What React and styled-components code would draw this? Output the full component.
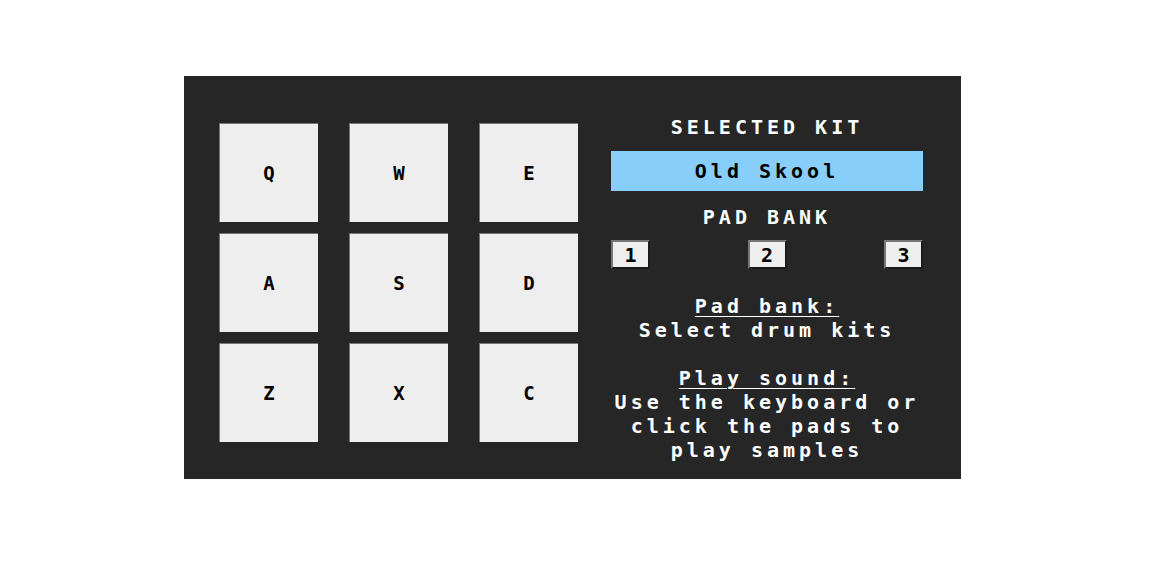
import React from 'react'
import styled, { createGlobalStyle } from 'styled-components'

const GlobalStyle = createGlobalStyle`
	html, body {
		margin: 0;
		padding: 0;
		background: #ffffff;
	}
`

const pads = ['Q', 'W', 'E', 'A', 'S', 'D', 'Z', 'X', 'C']

const App = () => {
	return (
		<Page>
			<GlobalStyle />
			<Machine>
				<PadGrid>
					{pads.map(key => (
						<Pad key={key}>{key}</Pad>
					))}
				</PadGrid>
				<Controls>
					<Label>SELECTED KIT</Label>
					<KitDisplay>Old Skool</KitDisplay>
					<Label $top={14}>PAD BANK</Label>
					<BankRow>
						<BankButton>1</BankButton>
						<BankButton>2</BankButton>
						<BankButton>3</BankButton>
					</BankRow>
					<Help>
						<u>Pad bank:</u>
						<br />
						Select drum kits
						<br />
						<br />
						<u>Play sound:</u>
						<br />
						Use the keyboard or
						<br />
						click the pads to
						<br />
						play samples
					</Help>
				</Controls>
			</Machine>
		</Page>
	)
}

export default App

const Page = styled.div`
	padding: 76px 0 0 184px;
`

const Machine = styled.div`
	width: 777px;
	height: 403px;
	box-sizing: border-box;
	padding: 39px 38px 0 35px;
	background: #262626;
	display: flex;
	align-items: flex-start;
	gap: 33px;
	font-family: "DejaVu Sans Mono", "Liberation Mono", monospace;
	font-weight: bold;
	font-size: 20px;
`

const PadGrid = styled.div`
	margin-top: 8px;
	display: grid;
	grid-template-columns: repeat(3, 99px);
	grid-auto-rows: 99px;
	column-gap: 31px;
	row-gap: 11px;
`

const Pad = styled.div`
	box-sizing: border-box;
	background: #eeeeee;
	border-top: 1px solid #777777;
	border-left: 1px solid #777777;
	color: #000000;
	display: flex;
	align-items: center;
	justify-content: center;
	font-size: 19px;
`

const Controls = styled.div`
	width: 312px;
	display: flex;
	flex-direction: column;
	color: #ffffff;
	text-align: center;
	line-height: 24px;
	letter-spacing: 4px;
`

const Label = styled.div`
	margin-top: ${ p => p.$top || 0 }px;
`

const KitDisplay = styled.div`
	margin-top: 12px;
	height: 40px;
	background: #87cefa;
	color: #000000;
	display: flex;
	align-items: center;
	justify-content: center;
`

const BankRow = styled.div`
	margin-top: 11px;
	display: flex;
	justify-content: space-between;
`

const BankButton = styled.div`
	box-sizing: border-box;
	width: 39px;
	height: 29px;
	background: #eeeeee;
	color: #000000;
	border-top: 2px solid #777777;
	border-left: 2px solid #777777;
	border-right: 2px solid #1a1a1a;
	border-bottom: 2px solid #1a1a1a;
	display: flex;
	align-items: center;
	justify-content: center;
	letter-spacing: 0;
`

const Help = styled.div`
	margin-top: 25px;

	u {
		text-decoration-thickness: 1px;
		text-underline-offset: 3px;
	}
`
